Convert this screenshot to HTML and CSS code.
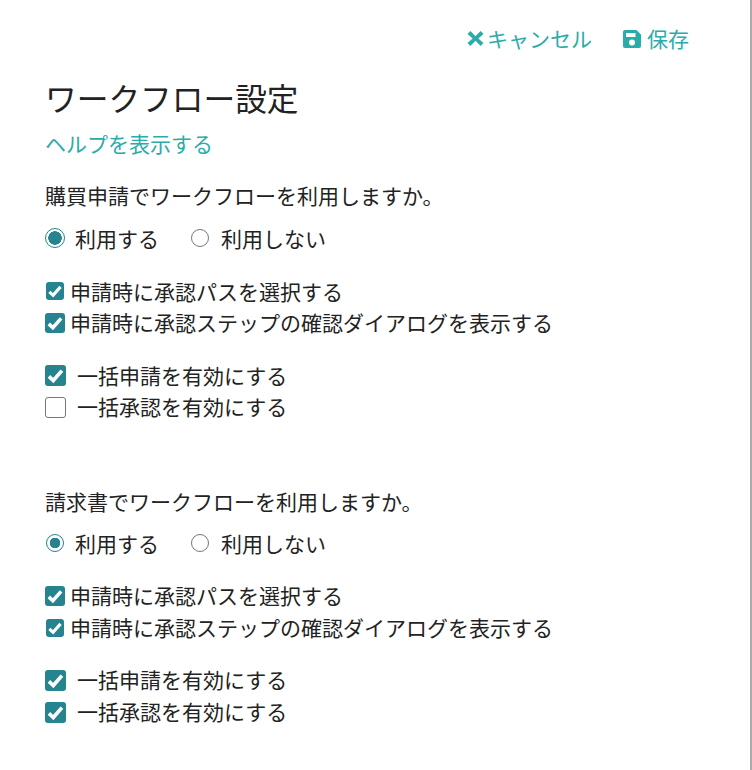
FILE: index.html
```html
<!DOCTYPE html>
<html lang="ja">
<head>
<meta charset="utf-8">
<title>ワークフロー設定</title>
<link rel="stylesheet" href="styles.css">
</head>
<body>
<div class="panel">
  <div class="actions">
    <a class="action">
      <svg class="icon-x" viewBox="0 0 16 16"><path d="M3.200 1 8 5.800 12.800 1 15.500 3.700 10.700 8 15.500 12.300 12.800 15 8 10.200 3.200 15 .5 12.300 5.300 8 .5 3.700z"/></svg>キャンセル
    </a>
    <a class="action">
      <svg class="icon-save" viewBox="0 0 18 18"><path fill-rule="evenodd" d="M2 0h11.500L18 4.500V16a2 2 0 0 1-2 2H2a2 2 0 0 1-2-2V2a2 2 0 0 1 2-2zM3 3v4h9.500V3zM9 9.500a3 3 0 1 0 0 6 3 3 0 0 0 0-6z"/></svg>保存
    </a>
  </div>
  <h1 class="title">ワークフロー設定</h1>
  <a class="help">ヘルプを表示する</a>

  <section class="group">
    <p class="question">購買申請でワークフローを利用しますか。</p>
    <div class="radios">
      <span class="radio"><i class="dot on big"></i>利用する</span>
      <span class="radio"><i class="dot"></i>利用しない</span>
    </div>
    <div class="checks small">
      <span class="check"><i class="box on"><svg viewBox="0 0 16 16"><path d="M3 8.700 6.300 11.800 12.900 4.300"/></svg></i>申請時に承認パスを選択する</span>
      <span class="check"><i class="box on big"><svg viewBox="0 0 16 16"><path d="M3 8.700 6.300 11.800 12.900 4.300"/></svg></i>申請時に承認ステップの確認ダイアログを表示する</span>
    </div>
    <div class="checks large">
      <span class="check"><i class="box on"><svg viewBox="0 0 16 16"><path d="M3 8.700 6.300 11.800 12.900 4.300"/></svg></i>一括申請を有効にする</span>
      <span class="check"><i class="box"></i>一括承認を有効にする</span>
    </div>
  </section>

  <section class="group second">
    <p class="question">請求書でワークフローを利用しますか。</p>
    <div class="radios">
      <span class="radio"><i class="dot on"></i>利用する</span>
      <span class="radio"><i class="dot"></i>利用しない</span>
    </div>
    <div class="checks small">
      <span class="check"><i class="box on big"><svg viewBox="0 0 16 16"><path d="M3 8.700 6.300 11.800 12.900 4.300"/></svg></i>申請時に承認パスを選択する</span>
      <span class="check"><i class="box on"><svg viewBox="0 0 16 16"><path d="M3 8.700 6.300 11.800 12.900 4.300"/></svg></i>申請時に承認ステップの確認ダイアログを表示する</span>
    </div>
    <div class="checks large">
      <span class="check"><i class="box on"><svg viewBox="0 0 16 16"><path d="M3 8.700 6.300 11.800 12.900 4.300"/></svg></i>一括申請を有効にする</span>
      <span class="check"><i class="box on"><svg viewBox="0 0 16 16"><path d="M3 8.700 6.300 11.800 12.900 4.300"/></svg></i>一括承認を有効にする</span>
    </div>
  </section>
</div>
</body>
</html>
```
FILE: styles.css
```css
html, body { margin: 0; padding: 0; height: 100%; overflow: hidden; background: #fff; }
body {
  font-family: Lato, "Noto Sans CJK JP", sans-serif;
  font-size: 21px;
  line-height: 31.200px;
  color: #222;
}
.panel {
  box-sizing: border-box;
  height: 770px;
  padding: 23px 0 0 45px;
  border-right: 2px solid #aaa;
}
.actions {
  display: flex;
  justify-content: flex-end;
  gap: 31px;
  padding-right: 61px;
}
.action {
  display: flex;
  align-items: center;
  color: #2aacaa;
}
.icon-x { width: 17px; height: 17px; fill: #2aacaa; margin-right: 3px; }
.icon-save { width: 18px; height: 18px; fill: #2aacaa; margin-right: 6px; }
.title {
  margin: 23px 0 0;
  font-size: 31.700px;
  line-height: 44px;
  font-weight: 400;
}
.help {
  display: block;
  margin-top: 7px;
  color: #2aacaa;
}
.group { margin-top: 21px; }
.second { margin-top: 63px; }
.question { margin: 0; }
.radios { display: flex; gap: 32px; margin-top: 11px; }
.radio { display: flex; align-items: center; }
.dot {
  box-sizing: border-box;
  width: 18px;
  height: 18px;
  margin: 0 12px 0 0;
  border: 1.500px solid #777;
  border-radius: 50%;
  background: #fff;
}
.dot.on {
  margin: 0 11px 0 1px;
  border-color: #25848f;
  background: radial-gradient(circle, #25848f 0 5px, #fff 5.500px);
}
.dot.on.big {
  width: 20px;
  height: 20px;
  margin: 0 10px 0 0;
  background: radial-gradient(circle, #25848f 0 6.500px, #fff 7px);
}
.checks { display: flex; flex-direction: column; }
.small { margin-top: 22px; }
.large { margin-top: 22px; }
.second .small { margin-top: 20.500px; }
.second .large { margin-top: 20.500px; }
.second .check { line-height: 32px; }
.check { display: flex; align-items: center; }
.box {
  box-sizing: border-box;
  display: block;
  flex: none;
  border: 1.500px solid #777;
  border-radius: 3px;
  background: #fff;
}
.box.on { border: 0; background: #25848f; }
.box svg { display: block; width: 100%; height: 100%; fill: none; stroke: #fff; stroke-width: 2.800; }
.small .box { width: 18px; height: 18px; margin: 0 6px 0 1px; }
.small .box.big { width: 20px; height: 20px; margin: 0 5px 0 0; }
.large .box { width: 21px; height: 21px; margin-right: 11px; }
```
